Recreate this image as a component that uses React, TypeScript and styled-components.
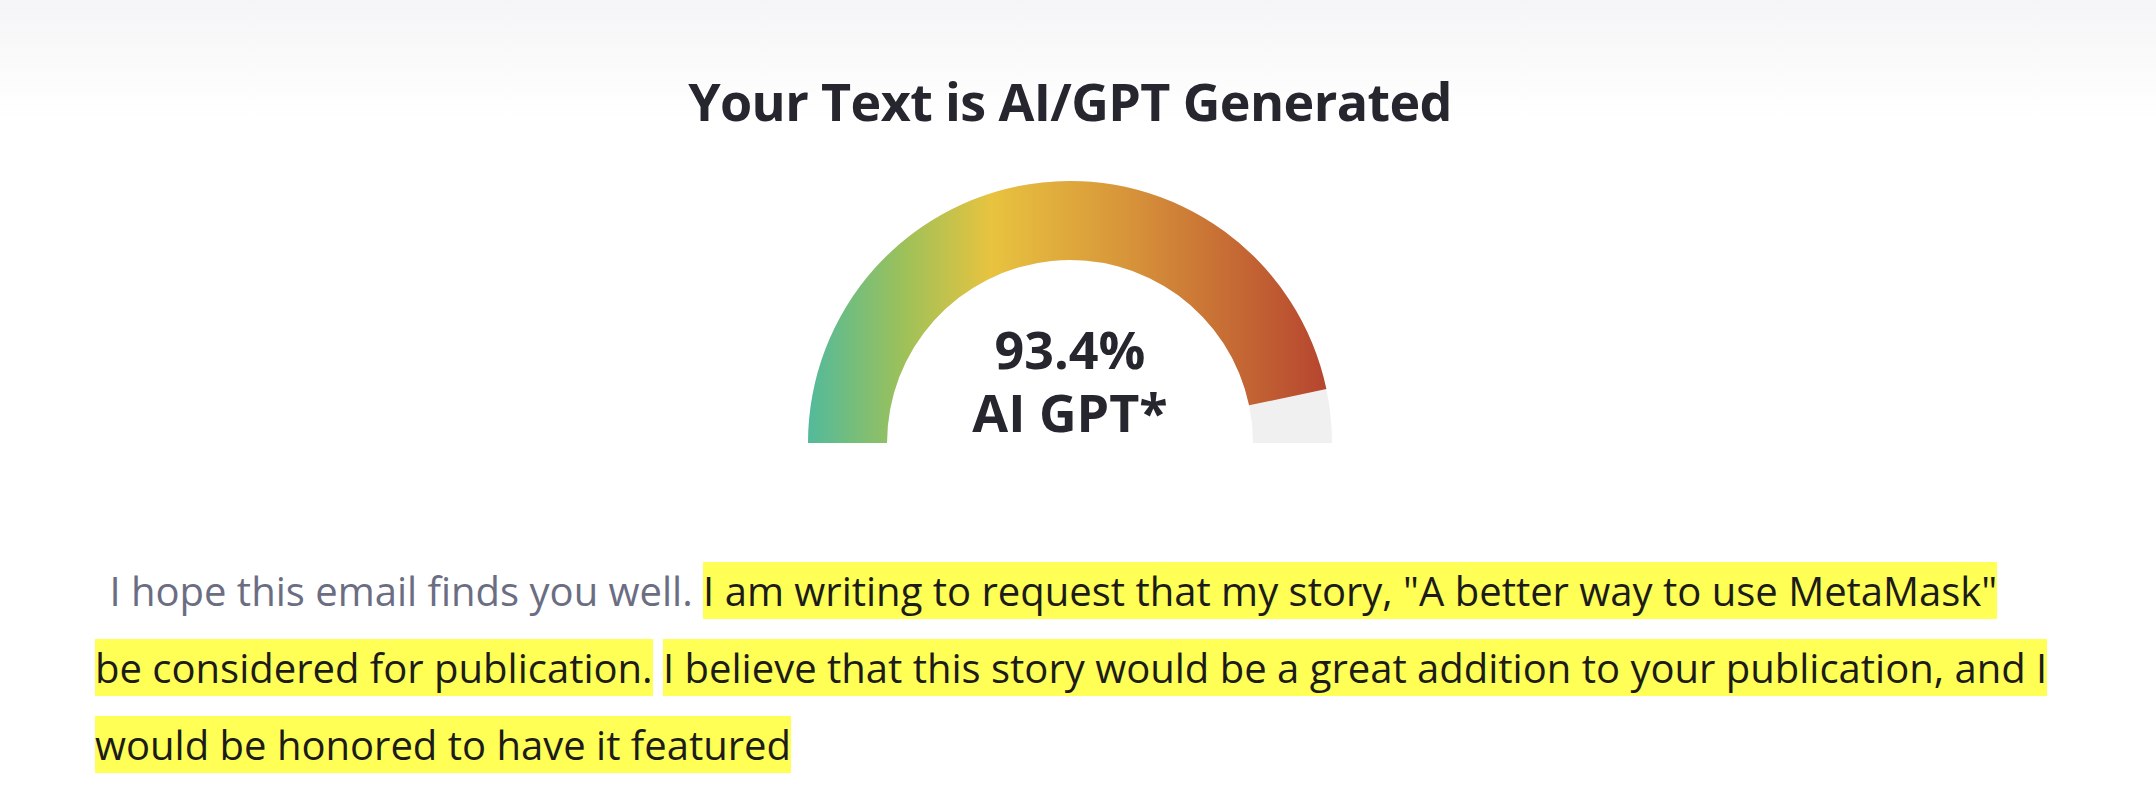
import React from "react";
import styled, { createGlobalStyle } from "styled-components";

const GlobalStyle = createGlobalStyle`
    html, body {
        margin: 0;
        padding: 0;
        background: #ffffff;
    }
    body {
        font-family: "Open Sans", "Noto Sans", sans-serif;
    }
`;

const Page = styled.div`
    min-height: 802px;
    padding-top: 71px;
    box-sizing: border-box;
    background: linear-gradient(180deg, #f5f5f7 0px, #ffffff 120px);
`;

const Header = styled.header`
    padding-right: 16px;
`;

const Title = styled.h1`
    margin: 0;
    text-align: center;
    font-size: 52px;
    line-height: 60px;
    font-weight: 700;
    color: #25262e;
    letter-spacing: -0.6px;
`;

const GaugeWrap = styled.div`
    position: relative;
    width: 524px;
    height: 264px;
    margin: 50px auto 0;
`;

const GaugeLabel = styled.div<{ $top: number }>`
    position: absolute;
    left: 0;
    right: 0;
    top: ${(p) => p.$top}px;
    text-align: center;
    font-size: 52px;
    line-height: 56px;
    font-weight: 700;
    color: #25262e;
`;

const Body = styled.p`
    margin: 107px 0 0;
    padding: 0 104px 0 95px;
    font-size: 40px;
    line-height: 77px;
    color: #6b6e82;
    text-indent: 4px;
`;

const Mark = styled.span`
    background: #ffff55;
    color: #1c1c1c;
    padding: 1px 0;
`;

const Gauge = ({ value }: { value: number }) => {
    const cx = 262;
    const cy = 262;
    const R = 262;
    const r = 183;
    const theta = Math.PI * (1 - value / 100);
    const ox = cx + R * Math.cos(theta);
    const oy = cy - R * Math.sin(theta);
    const ix = cx + r * Math.cos(theta);
    const iy = cy - r * Math.sin(theta);
    const full = `M ${cx - R} ${cy} A ${R} ${R} 0 0 1 ${cx + R} ${cy} L ${cx + r} ${cy} A ${r} ${r} 0 0 0 ${cx - r} ${cy} Z`;
    const part = `M ${cx - R} ${cy} A ${R} ${R} 0 0 1 ${ox} ${oy} L ${ix} ${iy} A ${r} ${r} 0 0 0 ${cx - r} ${cy} Z`;
    return (
        <svg width="524" height="264" viewBox="0 0 524 264">
            <defs>
                <linearGradient id="gaugeGrad" gradientUnits="userSpaceOnUse" x1="0" y1="0" x2="524" y2="0">
                    <stop offset="0" stopColor="#52ba9b" />
                    <stop offset="0.18" stopColor="#9cc15a" />
                    <stop offset="0.35" stopColor="#e8c33f" />
                    <stop offset="0.6" stopColor="#d8963a" />
                    <stop offset="1" stopColor="#b5432f" />
                </linearGradient>
            </defs>
            <path d={full} fill="#f0f0f0" />
            <path d={part} fill="url(#gaugeGrad)" />
        </svg>
    );
};

export default function App() {
    return (
        <>
            <GlobalStyle />
            <Page>
                <Header>
                    <Title>Your Text is AI/GPT Generated</Title>
                    <GaugeWrap>
                        <Gauge value={93.4} />
                        <GaugeLabel $top={140}>93.4%</GaugeLabel>
                        <GaugeLabel $top={203}>AI GPT*</GaugeLabel>
                    </GaugeWrap>
                </Header>
                <Body>
                    {"\u00a0"}I hope this email finds you well.{" "}
                    <Mark>
                        I am writing to request that my story, "A better way to use MetaMask" be considered for publication.
                    </Mark>{" "}
                    <Mark>
                        I believe that this story would be a great addition to your publication, and I would be honored to have it featured
                    </Mark>
                </Body>
            </Page>
        </>
    );
}
